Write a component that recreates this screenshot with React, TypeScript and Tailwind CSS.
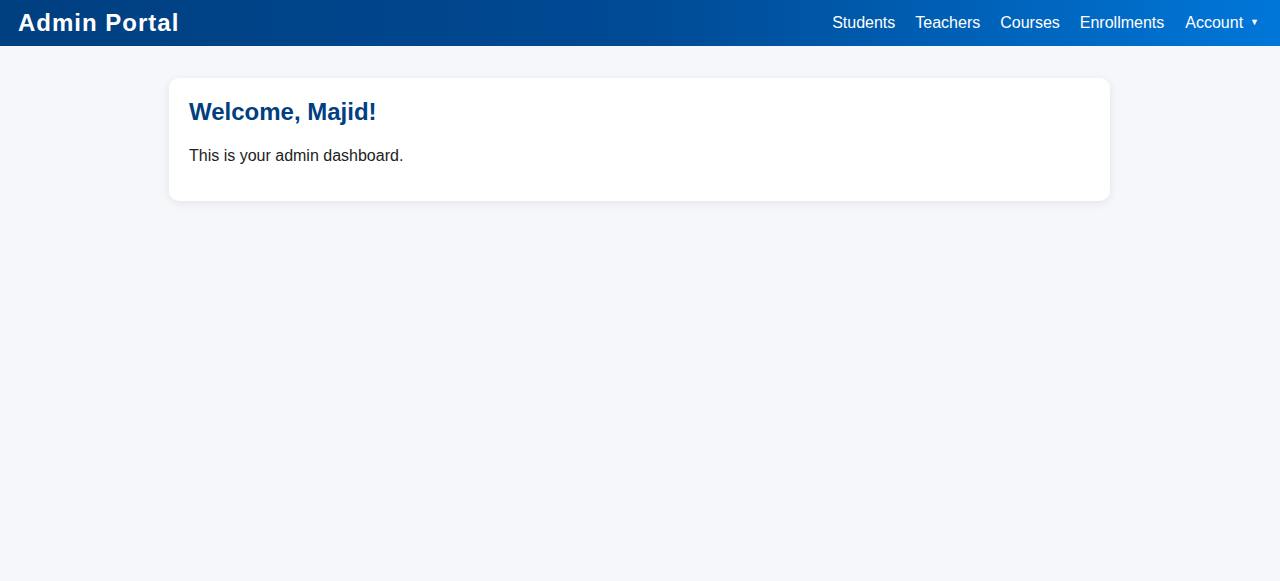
import { } from 'react'

const links = ['Students', 'Teachers', 'Courses', 'Enrollments']

export default function App() {
  return (
    <div className="min-h-[581px] bg-[#f5f7fa]" style={{ fontFamily: '"Liberation Sans", Arial, sans-serif' }}>
      {/* Header */}
      <header className="h-[46px] flex items-center justify-between pl-[18px] pr-[21px] bg-gradient-to-r from-[#003f80] via-[#004a94] to-[#0077d9] text-white">
        <div className="text-[24px] font-bold tracking-[1px]">Admin Portal</div>
        <nav className="flex items-center gap-5 text-[16px]">
          {links.map((l) => (
            <a key={l} href="#" className="text-white">{l}</a>
          ))}
          <a href="#" className="flex items-center gap-[7px] text-white ml-[1px]">
            Account <span className="text-[9px]">▼</span>
          </a>
        </nav>
      </header>

      {/* Card */}
      <main className="pt-8 pl-[15px] pr-4">
        <div className="max-w-[941px] mx-auto bg-white rounded-[10px] p-5 shadow-[0_2px_10px_rgba(0,0,0,0.08)]">
          <h2 className="text-[24px] leading-[28px] font-bold text-[#004080] mb-[18px]">Welcome, Majid!</h2>
          <p className="text-[16px] leading-[24px] text-[#222] mb-[13px]">This is your admin dashboard.</p>
        </div>
      </main>
    </div>
  )
}
